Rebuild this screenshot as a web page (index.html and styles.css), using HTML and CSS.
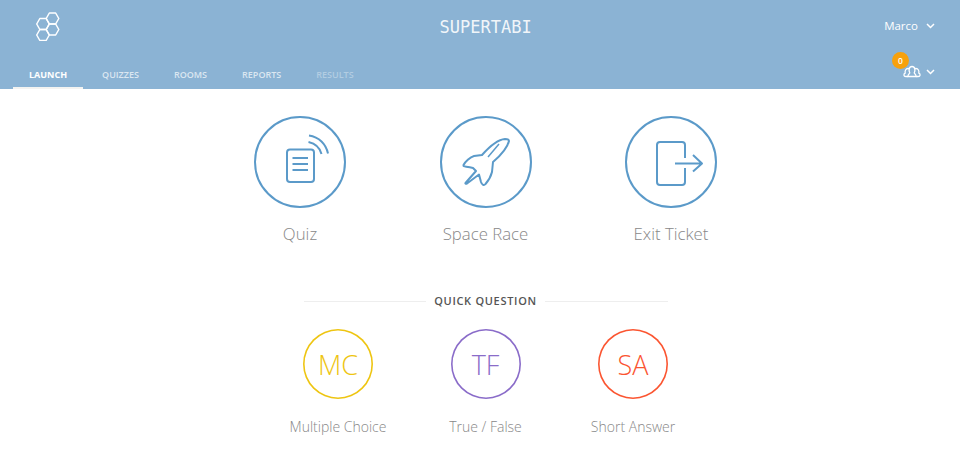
FILE: index.html
```html
<!DOCTYPE html>
<html lang="en">
<head>
    <meta charset="UTF-8">
    <meta name="viewport" content="width=device-width, initial-scale=1.0">
    <title>Supertabi</title>
    <link rel="stylesheet" href="styles.css">
</head>
<body>
    <header class="header">
        <div class="header-top">
            <svg class="logo" width="26" height="30" viewBox="35 11 26 30" fill="none" stroke="#fff" stroke-width="1.5" stroke-linejoin="round">
                <path d="M46.200 18.500l3.150-5.500h6.300l3.150 5.500-3.150 5.500h-6.300z"/>
                <path d="M36.700 24l3.150-5.500h6.300l3.150 5.500-3.150 5.500h-6.300z"/>
                <path d="M46.200 29.500l3.150-5.500h6.300l3.150 5.500-3.150 5.500h-6.300z"/>
                <path d="M36.700 35l3.150-5.500h6.300l3.150 5.500-3.150 5.500h-6.300z"/>
            </svg>
            <div class="title">SUPERTABI</div>
            <div class="user">Marco
                <svg class="chevron" width="9" height="6" viewBox="0 0 9 6"><path d="M1 1l3.500 3.500L8 1"/></svg>
            </div>
        </div>
        <div class="header-bottom">
            <nav class="tabs">
                <a class="tab active">LAUNCH</a>
                <a class="tab">QUIZZES</a>
                <a class="tab">ROOMS</a>
                <a class="tab">REPORTS</a>
                <a class="tab disabled">RESULTS</a>
            </nav>
            <div class="rooms">
                <span class="badge">0</span>
                <svg class="people" width="18" height="13" viewBox="0 0 18 13" fill="none" stroke="#fff" stroke-width="1.300" stroke-linejoin="round">
                    <path d="M5 11.500H2.800C.500 11.500.300 8.800 2.200 8.200 1.700 5.800 2.800 3.500 5 3.500c.7 0 1.200.2 1.600.6"/>
                    <path d="M13 11.500h2.200c2.300 0 2.500-2.700.600-3.300.5-2.400-.6-4.700-2.800-4.700-.7 0-1.200.2-1.600.6"/>
                    <path d="M5 11.500c-.4-2 1.200-2.600 1.800-3.500C5.500 5.500 5.800 1.500 9 1.500s3.500 4 2.200 6.500c.6.900 2.200 1.500 1.800 3.500z"/>
                </svg>
                <svg class="chevron" width="9" height="6" viewBox="0 0 9 6"><path d="M1 1l3.500 3.500L8 1"/></svg>
            </div>
        </div>
    </header>

    <main class="main">
        <div class="launch-row">
            <div class="launch-item">
                <div class="launch-circle">
                    <svg width="70" height="70" viewBox="265 127 70 70" fill="none" stroke="#5b9ac9" stroke-width="2">
                        <rect x="287" y="149.500" width="27" height="32.500" rx="3"/>
                        <path d="M292.500 158h15.500M292.500 164h15.500M292.500 170h15.500"/>
                        <path d="M309 135.500C319 137 326 144 328 153.500M308.500 142C315 143.500 320 148 321.500 154"/>
                    </svg>
                </div>
                <div class="launch-label">Quiz</div>
            </div>
            <div class="launch-item">
                <div class="launch-circle">
                    <svg width="70" height="70" viewBox="451 127 70 70" fill="none" stroke="#5b9ac9" stroke-width="2" stroke-linejoin="round">
                        <path d="M509 141C509 139 507 139 505 139 497 139.500 490 146 482 155L474 156C470 157 465 162 463.500 165 463 167 465 166 473 168L476 171 465.500 183C465 184 466 184 467 183.500L479 174.500 481 182C482 185 484 186 485.500 184 489 180 491 176 492 172L493 162C500 156 507 149 509 141Z"/>
                        <path d="M499 144L488 157" stroke-width="1.500"/>
                    </svg>
                </div>
                <div class="launch-label">Space Race</div>
            </div>
            <div class="launch-item">
                <div class="launch-circle">
                    <svg width="70" height="70" viewBox="636 127 70 70" fill="none" stroke="#5b9ac9" stroke-width="2" stroke-linejoin="round">
                        <path d="M685 158V145a3 3 0 0 0-3-3H660a3 3 0 0 0-3 3V182a3 3 0 0 0 3 3H682a3 3 0 0 0 3-3V168"/>
                        <path d="M675 163.500H702M693 155l9 8.500-9 8"/>
                    </svg>
                </div>
                <div class="launch-label">Exit Ticket</div>
            </div>
        </div>

        <div class="quick-heading">QUICK QUESTION</div>

        <div class="quick-row">
            <div class="quick-item">
                <div class="quick-circle mc">MC</div>
                <div class="quick-label">Multiple Choice</div>
            </div>
            <div class="quick-item">
                <div class="quick-circle tf">TF</div>
                <div class="quick-label">True / False</div>
            </div>
            <div class="quick-item">
                <div class="quick-circle sa">SA</div>
                <div class="quick-label">Short Answer</div>
            </div>
        </div>
    </main>
</body>
</html>
```

FILE: styles.css
```css
body {
    margin: 0;
    background-color: #fff;
    font-family: "Open Sans", sans-serif;
}
.header {
    height: 89px;
    background-color: #8bb3d4;
    color: #fff;
    display: flex;
    flex-direction: column;
    justify-content: space-between;
}
.header-top {
    display: flex;
    justify-content: space-between;
    padding: 11px 25px 0 35px;
    height: 30px;
}
.title {
    flex: 1;
    text-align: center;
    font-family: "DejaVu Sans Mono", monospace;
    font-size: 17px;
    line-height: 33px;
    padding-left: 26px;
    color: rgba(255, 255, 255, 0.9);
}
.user {
    font-size: 11.500px;
    line-height: 30px;
}
.chevron {
    fill: none;
    stroke: #fff;
    stroke-width: 1.500;
    margin-left: 5px;
    vertical-align: 1px;
}
.header-bottom {
    display: flex;
    justify-content: space-between;
    align-items: flex-end;
    padding: 0 25px 0 13px;
}
.tabs {
    display: flex;
    gap: 3px;
}
.tab {
    font-size: 9px;
    font-weight: 600;
    height: 24px;
    line-height: 20px;
    padding: 0 16px;
    color: rgba(255, 255, 255, 0.7);
    box-sizing: border-box;
}
.tab.active {
    color: #fff;
    font-weight: 700;
    border-bottom: 2px solid #f3f3f1;
}
.tab.disabled {
    color: rgba(255, 255, 255, 0.35);
}
.rooms {
    position: relative;
    height: 34px;
    display: flex;
    align-items: center;
    padding-bottom: 1px;
    box-sizing: border-box;
}
.rooms .chevron {
    margin-left: 5px;
}
.badge {
    position: absolute;
    left: -11px;
    top: -3px;
    width: 17px;
    height: 17px;
    border-radius: 50%;
    background-color: #f7a10c;
    font-size: 8.500px;
    font-weight: 600;
    line-height: 17px;
    text-align: center;
}
.main {
    display: flex;
    flex-direction: column;
    align-items: center;
    padding-left: 11px;
}
.launch-row {
    display: flex;
    margin-top: 27px;
    gap: 93.500px;
}
.launch-item {
    width: 92px;
    display: flex;
    flex-direction: column;
    align-items: center;
}
.launch-circle {
    width: 92px;
    height: 92px;
    box-sizing: border-box;
    border: 2px solid #5b9ac9;
    border-radius: 50%;
    display: flex;
    align-items: center;
    justify-content: center;
}
.launch-label {
    font-size: 16.800px;
    font-weight: 300;
    color: #888;
    margin-top: 14px;
    white-space: nowrap;
    line-height: 24px;
}
.quick-heading {
    width: 364px;
    margin-top: 47px;
    display: flex;
    align-items: center;
    gap: 8px;
    font-size: 11px;
    font-weight: 600;
    letter-spacing: 0.700px;
    color: #555;
    line-height: 16px;
    white-space: nowrap;
}
.quick-heading::before, .quick-heading::after {
    content: "";
    flex: 1;
    height: 1px;
    background-color: #eee;
}
.quick-row {
    display: flex;
    gap: 77.500px;
    margin-top: 20px;
}
.quick-item {
    width: 70px;
    display: flex;
    flex-direction: column;
    align-items: center;
}
.quick-circle {
    width: 70px;
    height: 70px;
    border-radius: 50%;
    box-shadow: inset 0 0 0 1.600px currentColor;
    display: flex;
    align-items: center;
    justify-content: center;
    font-size: 27px;
    font-weight: 300;
}
.mc { color: #eec512; }
.tf { color: #8a6cc9; }
.sa { color: #fb5531; }
.quick-label {
    font-size: 14px;
    font-weight: 300;
    color: #888;
    margin-top: 18px;
    white-space: nowrap;
    line-height: 20px;
}
```
